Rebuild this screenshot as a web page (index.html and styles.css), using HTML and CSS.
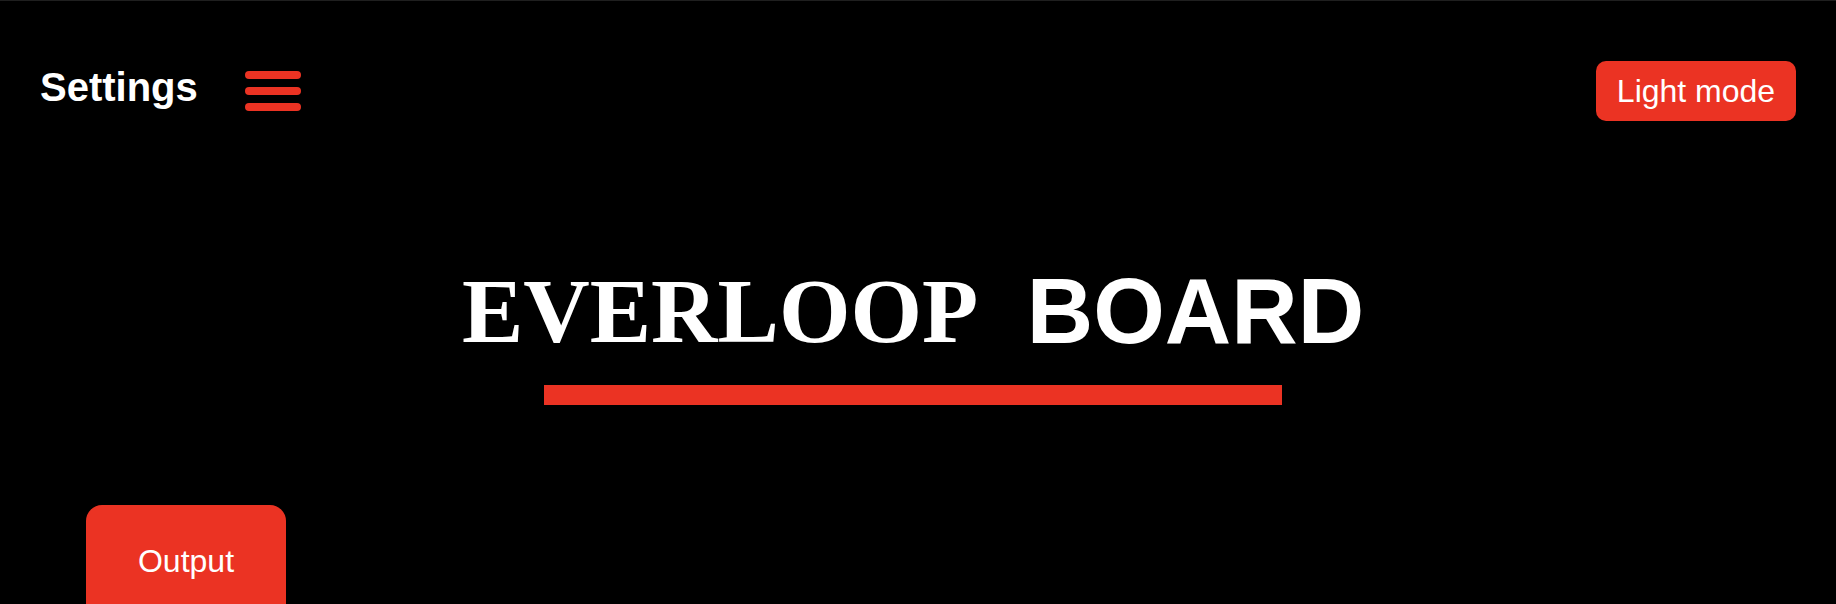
FILE: index.html
```html
<!DOCTYPE html>
<html lang="en">

<head>
    <meta charset="UTF-8">
    <meta name="viewport" content="width=device-width, initial-scale=1.0">
    <title>Everloop Board</title>
    <link rel="stylesheet" href="styles.css">
</head>

<body>

    <header class="header">
        <div class="settings">
            <h2 class="settings-title" id="settings-label">Settings</h2>
            <button class="menu-btn" type="button" aria-labelledby="settings-label">
                <span class="menu-bar"></span>
                <span class="menu-bar"></span>
                <span class="menu-bar"></span>
            </button>
        </div>
        <button class="mode-btn" type="button">Light mode</button>
    </header>

    <main>
        <!-- Title -->
        <div class="title-container">
            <h1 class="title"><span class="title-serif">EVERLOOP&nbsp;</span><span>&nbsp;BOARD</span></h1>
            <hr class="title-line">
        </div>

        <!-- Tabs -->
        <div class="tabs">
            <button class="tab-btn" type="button">Output</button>
        </div>
    </main>

</body>

</html>
```

FILE: styles.css
```css
* {
    margin: 0;
    padding: 0;
    box-sizing: border-box;
}

body {
    font-family: Helvetica, "Liberation Sans", Arial, sans-serif;
    background: #000;
    color: #fff;
    border-top: 1px solid #1f1f1f;
    min-height: 100vh;
}

button {
    font-family: inherit;
    font-size: 32px;
    line-height: 36px;
    color: #fff;
    background: #eb3323;
    border: none;
    cursor: pointer;
}

/* Header */
.header {
    display: flex;
    justify-content: space-between;
    align-items: center;
    padding: 60px 40px 0;
}

.settings {
    display: flex;
    align-items: center;
    gap: 47px;
}

.settings-title {
    font-size: 40px;
    line-height: 44px;
    padding-bottom: 8px;
}

.menu-btn {
    display: flex;
    flex-direction: column;
    gap: 8px;
    width: 56px;
    background: none;
}

.menu-bar {
    width: 100%;
    height: 8px;
    border-radius: 4px;
    background: #eb3323;
}

.mode-btn {
    width: 200px;
    padding: 12px 0;
    border-radius: 10px;
}

/* Title */
.title-container {
    display: flex;
    flex-direction: column;
    align-items: center;
    padding: 138px 10px 0 0;
}

.title {
    display: flex;
    align-items: flex-start;
    font-size: 92px;
    line-height: 105px;
    white-space: nowrap;
}

.title-serif {
    font-family: Times, "Liberation Serif", "Times New Roman", serif;
}

.title-line {
    width: 738px;
    max-width: 100%;
    height: 20px;
    margin-top: 21px;
    border: none;
    background: #eb3323;
}

/* Tabs */
.tabs {
    display: flex;
    padding: 100px 86px 0;
}

.tab-btn {
    width: 200px;
    padding: 38px 0 26px;
    border-radius: 16px 16px 0 0;
}
```
